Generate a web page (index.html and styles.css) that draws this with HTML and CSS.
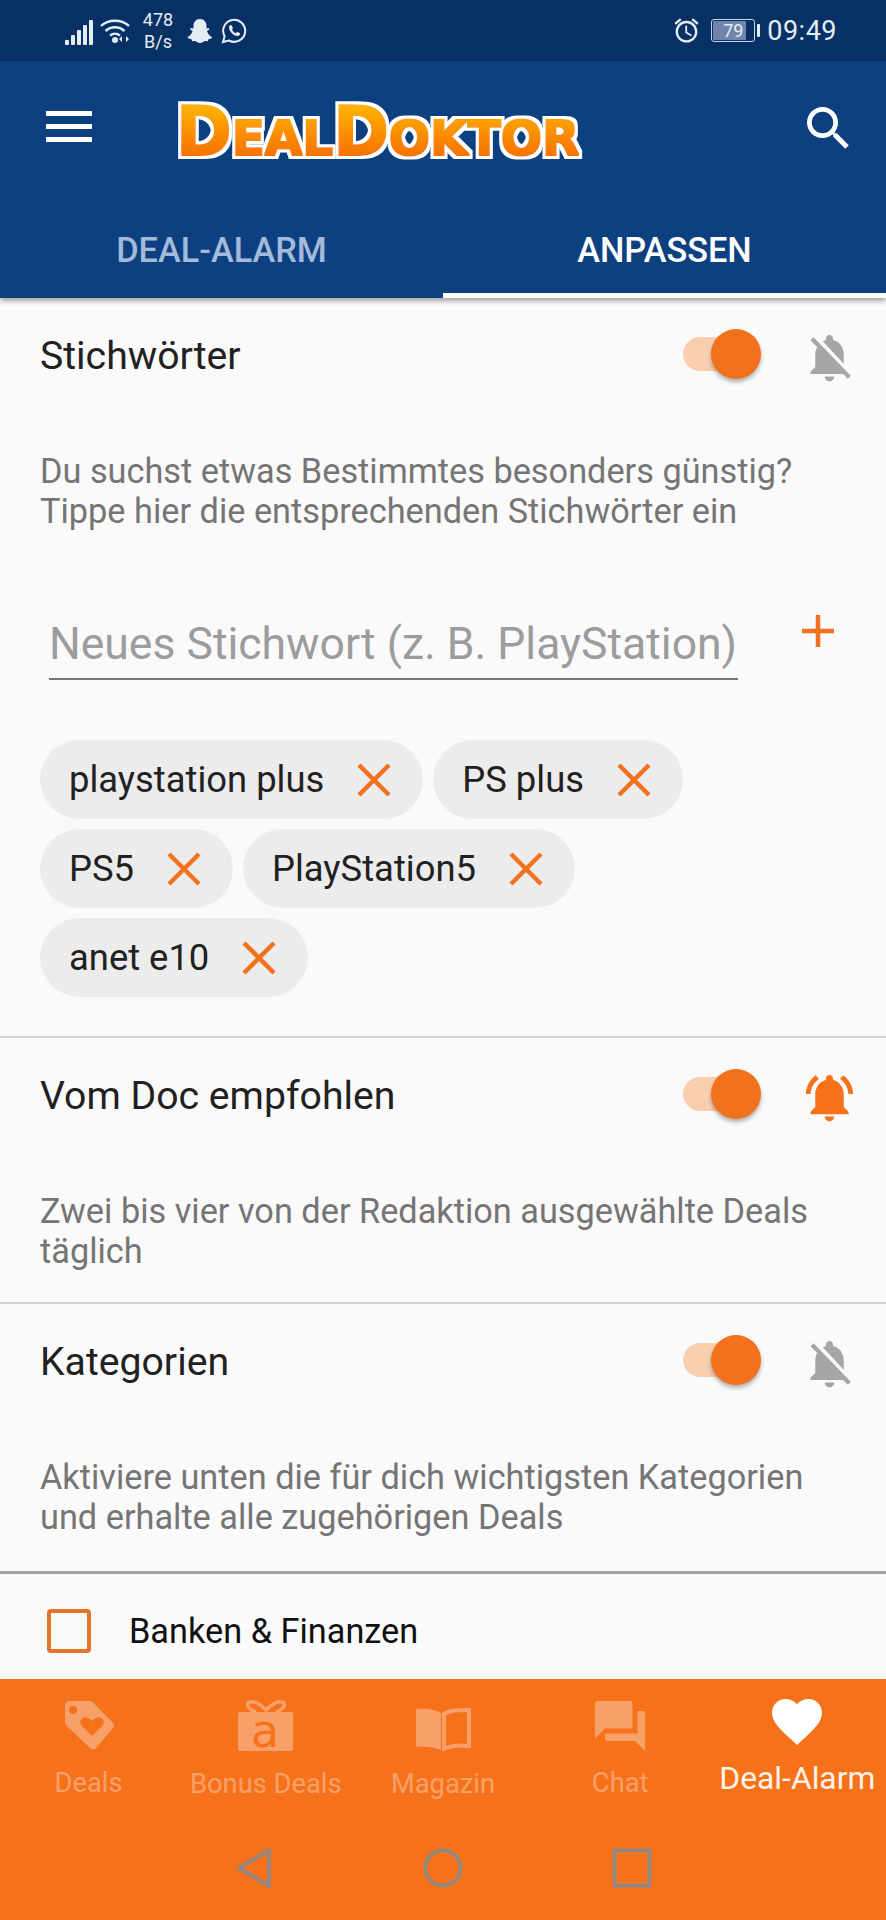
FILE: index.html
```html
<!doctype html>
<html>
<head>
<meta charset="utf-8">
<link rel="stylesheet" href="styles.css">
</head>
<body>
<div class="screen">

	<div class="statusBar">
		<div class="statusLeft">
			<svg class="signalIcon" viewBox="0 0 28 26"><rect x="0" y="20" width="4" height="5" rx="1"/><rect x="6" y="15" width="4" height="10" rx="1"/><rect x="12" y="10" width="4" height="15" rx="1"/><rect x="18" y="5" width="4" height="20" rx="1"/><rect x="24" y="0" width="4" height="25" rx="1"/></svg>
			<svg class="wifiIcon" viewBox="0 0 32 26"><path class="wifiArc" d="M1 8C8 1 22 1 29 8M5.500 13C11 8 19 8 24.500 13M10 17.500C13 15 17 15 20 17.500"/><circle cx="15" cy="22" r="3"/><path d="M22 18v6l-3-3zM26 18v6l3-3z"/></svg>
			<div class="netSpeed">478<br>B/s</div>
			<svg class="snapIcon" viewBox="0 0 26 26"><path d="M13 1c4.500 0 6.500 3.500 6.500 6.500v3l2-.5 1 1.500-2.500 1.500c.5 2.500 2.500 5 5 6l-.5 1.500-3 .8-.7 2-2.800-.3c-1.500.2-2.500 2-5 2s-3.500-1.800-5-2l-2.800.3-.7-2-3-.8L.5 19c2.500-1 4.500-3.500 5-6L3 11.500 4 10l2.500.500v-3C6.500 4.500 8.500 1 13 1z"/></svg>
			<svg class="whatsIcon" viewBox="0 0 26 26"><path class="whatsRing" d="M2 24l1.600-5.800A11 11 0 1 1 8 22.500z"/><path d="M9.500 7c-.5 0-1.500 1-1.500 2.500 0 3.500 4.500 8.500 8.500 8.500 1.500 0 2.500-1 2.500-2 0-.5 0-.8-.3-1l-2.200-1c-.4-.2-.7 0-1 .4l-.7.8c-1.500-.5-3-2-3.800-3.500l.6-.8c.3-.3.3-.6.2-.9l-.9-2.200c-.2-.4-.4-.5-1.400-.8z"/></svg>
		</div>
		<div class="statusRight">
			<svg class="alarmIcon" viewBox="0 0 24 24"><path d="M22 5.720l-4.600-3.860-1.290 1.530 4.600 3.860L22 5.720zM7.880 3.390L6.600 1.860 2 5.710l1.290 1.530 4.590-3.850zM12.500 8H11v6l4.750 2.850.75-1.230-4-2.370V8zM12 4c-4.970 0-9 4.030-9 9s4.030 9 9 9 9-4.030 9-9-4.030-9-9-9zm0 16c-3.870 0-7-3.130-7-7s3.130-7 7-7 7 3.130 7 7-3.130 7-7 7z"/></svg>
			<div class="battery"><div class="batteryBody"><span class="batteryFill"></span><span class="batteryText">79</span></div><span class="batteryCap"></span></div>
			<div class="clock">09:49</div>
		</div>
	</div>

	<div class="header">
		<div class="toolbar">
			<div class="menuIcon"><span></span><span></span><span></span></div>
			<svg class="logo" viewBox="0 0 410 66">
				<defs>
					<linearGradient id="logoGrad" x1="0" y1="0" x2="0" y2="1">
						<stop offset="0.1" stop-color="#ffb800"/>
						<stop offset="0.85" stop-color="#f56c02"/>
					</linearGradient>
					<filter id="logoFat" x="-5%" y="-20%" width="110%" height="140%">
						<feMorphology in="SourceGraphic" operator="dilate" radius="1" result="fat"/>
						<feMorphology in="SourceAlpha" operator="dilate" radius="3.500" result="wide"/>
						<feGaussianBlur in="wide" stdDeviation="0.600" result="soft"/>
						<feFlood flood-color="#ffffff"/>
						<feComposite in2="soft" operator="in" result="edge"/>
						<feMerge>
							<feMergeNode in="edge"/>
							<feMergeNode in="fat"/>
						</feMerge>
					</filter>
				</defs>
				<text class="logoText" x="4" y="56" filter="url(#logoFat)" fill="url(#logoGrad)"><tspan class="logoBig">D</tspan>EAL<tspan class="logoBig">D</tspan>OKTOR</text>
			</svg>
			<svg class="searchIcon" viewBox="3 3 18 18"><path d="M15.500 14h-.79l-.28-.27C15.410 12.590 16 11.110 16 9.500 16 5.910 13.090 3 9.500 3S3 5.910 3 9.500 5.910 16 9.500 16c1.610 0 3.090-.59 4.230-1.570l.27.28v.79l5 4.990L20.490 19l-4.990-5zm-6 0C7.010 14 5 11.990 5 9.500S7.010 5 9.500 5 14 7.010 14 9.500 11.990 14 9.500 14z"/></svg>
		</div>
		<div class="tabs">
			<div class="tab">DEAL-ALARM</div>
			<div class="tab tabActive">ANPASSEN</div>
		</div>
	</div>

	<div class="content">
		<div class="section sectionWords">
			<div class="sectionHead">
				<div class="sectionTitle">Stichwörter</div>
				<div class="toggle"><span class="toggleKnob"></span></div>
				<svg class="bell bellOff" viewBox="0 0 24 24"><path d="M20 18.690L7.840 6.140 5.270 3.490 4 4.760l2.800 2.800v.01c-.52.99-.8 2.160-.8 3.420v5l-2 2v1h13.730l2 2L21 19.720l-1-1.030zM12 22c1.110 0 2-.89 2-2h-4c0 1.110.89 2 2 2zm6-7.320V11c0-3.080-1.640-5.640-4.500-6.320V4c0-.83-.67-1.500-1.500-1.500s-1.500.67-1.500 1.500v.68c-.15.03-.29.08-.42.12-.1.03-.2.07-.3.11h-.01c-.2.08-.4.17-.59.27-.01 0-.01 0-.02.01L18 14.680z"/></svg>
			</div>
			<p class="sectionText">Du suchst etwas Bestimmtes besonders günstig? Tippe hier die entsprechenden Stichwörter ein</p>
			<div class="addRow">
				<div class="wordInput">Neues Stichwort (z. B. PlayStation)</div>
				<svg class="plusIcon" viewBox="0 0 36 36"><path d="M18 2v32M2 18h32"/></svg>
			</div>
			<div class="chips">
				<div class="chip">playstation plus<svg class="chipX" viewBox="0 0 34 34"><path d="M2 2l30 30M32 2L2 32"/></svg></div>
				<div class="chip">PS plus<svg class="chipX" viewBox="0 0 34 34"><path d="M2 2l30 30M32 2L2 32"/></svg></div>
				<div class="chip">PS5<svg class="chipX" viewBox="0 0 34 34"><path d="M2 2l30 30M32 2L2 32"/></svg></div>
				<div class="chip">PlayStation5<svg class="chipX" viewBox="0 0 34 34"><path d="M2 2l30 30M32 2L2 32"/></svg></div>
				<div class="chip">anet e10<svg class="chipX" viewBox="0 0 34 34"><path d="M2 2l30 30M32 2L2 32"/></svg></div>
			</div>
		</div>

		<div class="section">
			<div class="sectionHead">
				<div class="sectionTitle">Vom Doc empfohlen</div>
				<div class="toggle"><span class="toggleKnob"></span></div>
				<svg class="bell bellOn" viewBox="0 0 24 24"><path d="M7.580 4.080L6.150 2.650C3.750 4.480 2.170 7.300 2.030 10.500h2c.15-2.650 1.510-4.970 3.550-6.420zm12.390 6.420h2c-.15-3.200-1.730-6.020-4.120-7.850l-1.420 1.430c2.020 1.450 3.390 3.770 3.540 6.420zM18 11c0-3.070-1.640-5.640-4.500-6.320V4c0-.83-.67-1.500-1.500-1.500s-1.500.67-1.500 1.500v.68C7.630 5.360 6 7.920 6 11v5l-2 2v1h16v-1l-2-2v-5zm-6 11c.14 0 .27-.01.4-.04.65-.14 1.180-.58 1.440-1.180.1-.24.15-.5.15-.78h-4c.01 1.100.9 2 2.010 2z"/></svg>
			</div>
			<p class="sectionText">Zwei bis vier von der Redaktion ausgewählte Deals täglich</p>
		</div>

		<div class="section sectionLast">
			<div class="sectionHead">
				<div class="sectionTitle">Kategorien</div>
				<div class="toggle"><span class="toggleKnob"></span></div>
				<svg class="bell bellOff" viewBox="0 0 24 24"><path d="M20 18.690L7.840 6.140 5.270 3.490 4 4.760l2.800 2.800v.01c-.52.99-.8 2.160-.8 3.420v5l-2 2v1h13.730l2 2L21 19.720l-1-1.030zM12 22c1.110 0 2-.89 2-2h-4c0 1.110.89 2 2 2zm6-7.320V11c0-3.080-1.640-5.640-4.500-6.320V4c0-.83-.67-1.500-1.500-1.500s-1.500.67-1.500 1.500v.68c-.15.03-.29.08-.42.12-.1.03-.2.07-.3.11h-.01c-.2.08-.4.17-.59.27-.01 0-.01 0-.02.01L18 14.680z"/></svg>
			</div>
			<p class="sectionText">Aktiviere unten die für dich wichtigsten Kategorien und erhalte alle zugehörigen Deals</p>
		</div>

		<div class="categoryRow">
			<span class="checkBox"></span>
			<span class="categoryName">Banken &amp; Finanzen</span>
		</div>
	</div>

	<div class="bottomNav">
		<div class="navItems">
			<div class="navItem">
				<svg class="navIcon" viewBox="0 0 50 50"><path fill-rule="evenodd" d="M6 0h19c2 0 3 .6 4.500 2L49 22c1.500 1.500 1.500 3.500 0 5L32 47c-2 2-4 2-6 0L3 25c-1.500-1.500-2-3-2-5V5c0-3 2-5 5-5zm3 5a4 4 0 1 0 0 8 4 4 0 0 0 0-8zm19 30l10.500-10.500c3-4-.5-9-5-8-2 .3-4 1.500-5.500 3.500-1.500-2-3.500-3.200-5.500-3.500-4.500-1-8 4-5 8z"/></svg>
				<div class="navLabel">Deals</div>
			</div>
			<div class="navItem">
				<svg class="navIcon giftIcon" viewBox="0 0 56 64"><path class="giftBow" d="M10 5c4-3 10-1 18 7 8-8 14-10 18-7 2 3-2 7-8 9M10 5c-2 3 2 7 8 9"/><rect class="giftBox" x="0" y="14" width="55" height="39" rx="2"/><text class="giftA" x="27" y="49">a</text></svg>
				<div class="navLabel">Bonus Deals</div>
			</div>
			<div class="navItem">
				<svg class="navIcon bookIcon" viewBox="0 0 56 44"><path d="M26 6C20 2 10 1 1 2v38c9-1 18 0 25 3z"/><path class="bookPage" d="M29 7c6-4 15-4 25-4v36c-10-1-18-.5-25 3z"/></svg>
				<div class="navLabel">Magazin</div>
			</div>
			<div class="navItem">
				<svg class="navIcon" viewBox="2 2 20 20"><path d="M21 6h-2v9H6v2c0 .55.45 1 1 1h11l4 4V7c0-.55-.45-1-1-1zm-4 6V3c0-.55-.45-1-1-1H3c-.55 0-1 .45-1 1v14l4-4h10c.55 0 1-.45 1-1z"/></svg>
				<div class="navLabel">Chat</div>
			</div>
			<div class="navItem navActive">
				<svg class="navIcon" viewBox="2 3 20 18.400"><path d="M12 21.350l-1.450-1.320C5.400 15.360 2 12.280 2 8.500 2 5.420 4.420 3 7.500 3c1.740 0 3.410.81 4.500 2.090C13.090 3.810 14.760 3 16.500 3 19.580 3 22 5.420 22 8.500c0 3.780-3.400 6.860-8.550 11.540L12 21.350z"/></svg>
				<div class="navLabel">Deal-Alarm</div>
			</div>
		</div>
		<div class="systemNav">
			<svg class="sysIcon" viewBox="0 0 36 42"><path d="M33 3v36L3 21z"/></svg>
			<svg class="sysIcon" viewBox="0 0 42 42"><circle cx="21" cy="21" r="18.500"/></svg>
			<svg class="sysIcon" viewBox="0 0 40 40"><path d="M2.500 2.500h35v35h-35z"/></svg>
		</div>
	</div>

</div>
</body>
</html>
```

FILE: styles.css
```css
html, body {
	margin: 0;
	padding: 0;
}
body {
	background-color: #fafafa;
	font-family: Roboto, "Liberation Sans", sans-serif;
}
.screen {
	width: 886px;
	height: 1920px;
	display: flex;
	flex-direction: column;
	overflow: hidden;
}

/* status bar */
.statusBar {
	height: 61px;
	flex: none;
	background-color: #073065;
	color: #e6ecf4;
	display: flex;
	justify-content: space-between;
	align-items: center;
	padding: 0 49px 0 65px;
}
.statusLeft, .statusRight {
	display: flex;
	align-items: center;
}
.signalIcon {
	width: 28px;
	height: 26px;
	fill: #e6ecf4;
	margin-top: 4px;
}
.wifiIcon {
	width: 32px;
	height: 26px;
	margin-left: 7px;
	fill: #e6ecf4;
}
.wifiArc {
	fill: none;
	stroke: #e6ecf4;
	stroke-width: 2.400;
}
.netSpeed {
	width: 34px;
	margin-left: 9px;
	font-size: 18px;
	line-height: 22px;
	text-align: center;
}
.snapIcon {
	width: 26px;
	height: 26px;
	margin-left: 12px;
	fill: #e6ecf4;
}
.whatsIcon {
	width: 26px;
	height: 26px;
	margin-left: 8px;
	fill: #e6ecf4;
}
.whatsRing {
	fill: none;
	stroke: #e6ecf4;
	stroke-width: 2;
}
.alarmIcon {
	width: 29px;
	height: 29px;
	fill: #e6ecf4;
}
.battery {
	display: flex;
	align-items: center;
	margin-left: 10px;
}
.batteryBody {
	width: 42px;
	height: 21px;
	border: 1px solid #c9d3e2;
	border-radius: 3px;
	position: relative;
	display: flex;
	align-items: center;
	justify-content: center;
}
.batteryFill {
	position: absolute;
	left: 1px;
	top: 1px;
	bottom: 1px;
	width: 79%;
	background-color: #6f86aa;
	border-radius: 1px;
}
.batteryText {
	position: relative;
	font-size: 18px;
	color: #e6ecf4;
}
.batteryCap {
	width: 3px;
	height: 13px;
	margin-left: 2px;
	background-color: #e6ecf4;
	border-radius: 1px;
}
.clock {
	margin-left: 7px;
	font-size: 27px;
	letter-spacing: 0.500px;
}

/* app header */
.header {
	flex: none;
	height: 237px;
	background-color: #0d4080;
	box-shadow: 0 3px 5px rgba(0,0,0,0.35);
	position: relative;
	display: flex;
	flex-direction: column;
}
.toolbar {
	height: 158px;
	display: flex;
	align-items: center;
	position: relative;
	padding: 0 36px 28px 46px;
}
.menuIcon {
	width: 46px;
	display: flex;
	flex-direction: column;
	gap: 8px;
}
.menuIcon span {
	height: 5px;
	background-color: #fff;
}
.logo {
	width: 410px;
	height: 66px;
	margin-left: 80px;
	margin-top: 12px;
	overflow: visible;
}
.logoText {
	font-family: "DejaVu Sans", sans-serif;
	font-weight: bold;
	font-size: 48.500px;
}
.logoBig {
	font-size: 67px;
}
.searchIcon {
	width: 43px;
	height: 43px;
	margin-left: auto;
	margin-top: 4px;
	fill: #fff;
}
.tabs {
	flex: 1;
	display: flex;
}
.tab {
	width: 50%;
	text-align: center;
	font-size: 34.300px;
	font-weight: 500;
	line-height: 62px;
	color: #a3bad8;
}
.tabActive {
	color: #fff;
	border-bottom: 5px solid #fff;
	height: 74px;
	box-sizing: content-box;
}

/* content */
.content {
	flex: 1;
	min-height: 0;
	overflow: hidden;
}
.section {
	border-bottom: 2px solid #d2d2d2;
	padding: 0 40px 31px;
}
.sectionWords {
	padding-bottom: 39px;
}
.sectionLast {
	border-bottom: 3px solid #a2a2a2;
	padding-bottom: 34px;
}
.sectionHead {
	height: 114px;
	display: flex;
	align-items: center;
}
.sectionTitle {
	font-size: 39.200px;
	color: #212121;
	flex: 1;
	margin-top: 2px;
}
.toggle {
	width: 70px;
	height: 34px;
	margin-right: 48px;
	margin-bottom: 3px;
	border-radius: 17px;
	background-color: #f9cfb0;
	position: relative;
}
.toggleKnob {
	position: absolute;
	right: -8px;
	top: -8px;
	width: 50px;
	height: 50px;
	border-radius: 25px;
	background-color: #f2711c;
	box-shadow: 0 3px 4px rgba(0,0,0,0.3);
}
.bell {
	width: 57px;
	height: 57px;
	margin-right: -12px;
	margin-top: 4px;
}
.bellOff {
	fill: #a6a6a6;
}
.bellOn {
	fill: #f5721b;
}
.sectionText {
	margin: 39px 0 0;
	font-size: 34.300px;
	line-height: 40px;
	color: #757575;
}
.addRow {
	display: flex;
	align-items: flex-start;
	margin-top: 77px;
	padding-left: 9px;
}
.wordInput {
	width: 689px;
	height: 72px;
	box-sizing: border-box;
	border-bottom: 2px solid #757575;
	font-size: 44.500px;
	line-height: 72px;
	color: #9c9c9c;
	white-space: nowrap;
}
.plusIcon {
	width: 36px;
	height: 36px;
	margin-left: 62px;
	margin-top: 5px;
	fill: none;
	stroke: #f2711c;
	stroke-width: 4.500px;
}
.chips {
	display: flex;
	flex-wrap: wrap;
	gap: 10px;
	margin: 60px 0 0;
}
.chip {
	height: 79px;
	display: flex;
	align-items: center;
	padding: 0 32px 0 29px;
	border-radius: 40px;
	background-color: #ececec;
	font-size: 36.400px;
	color: #212121;
	white-space: nowrap;
}
.chipX {
	width: 34px;
	height: 34px;
	margin-left: 33px;
	fill: none;
	stroke: #f2711c;
	stroke-width: 4.500px;
}
.categoryRow {
	display: flex;
	align-items: center;
	box-sizing: border-box;
	height: 105px;
	padding: 8px 0 0 47px;
}
.checkBox {
	width: 44px;
	height: 44px;
	box-sizing: border-box;
	border: 4px solid #e5752c;
	border-radius: 4px;
}
.categoryName {
	margin-left: 38px;
	font-size: 34.300px;
	color: #111;
}

/* bottom navigation */
.bottomNav {
	flex: none;
	height: 241px;
	background-color: #f5721b;
}
.navItems {
	display: flex;
	height: 141px;
}
.navItem {
	width: 20%;
	display: flex;
	flex-direction: column;
	align-items: center;
	color: #f7a069;
	fill: #f7a069;
}
.navIcon {
	height: 50px;
	width: 50px;
	margin-top: 22px;
	fill: inherit;
}
.giftIcon {
	width: 56px;
	height: 64px;
	margin-top: 19px;
	margin-bottom: -10px;
}
.giftBow {
	fill: none;
	stroke: #f7a069;
	stroke-width: 3.500;
}
.giftA {
	font-family: "DejaVu Sans", sans-serif;
	font-size: 46px;
	text-anchor: middle;
	fill: #f5721b;
}
.bookIcon {
	width: 56px;
	height: 44px;
	margin-top: 28px;
	margin-bottom: 1px;
}
.bookPage {
	fill: none;
	stroke: #f7a069;
	stroke-width: 4;
}
.navLabel {
	margin-top: 17px;
	font-size: 27.300px;
	line-height: 30px;
}
.navActive {
	color: #fff3ea;
	fill: #fff;
}
.navActive .navIcon {
	margin-top: 20px;
	height: 46px;
	margin-bottom: 2px;
}
.navActive .navLabel {
	font-size: 31.800px;
	margin-top: 16px;
}
.systemNav {
	display: flex;
	justify-content: center;
	align-items: center;
	gap: 149px;
	height: 96px;
}
.sysIcon {
	width: 40px;
	height: 42px;
	fill: none;
	stroke: #93887f;
	stroke-width: 4px;
	stroke-linejoin: round;
}
```
